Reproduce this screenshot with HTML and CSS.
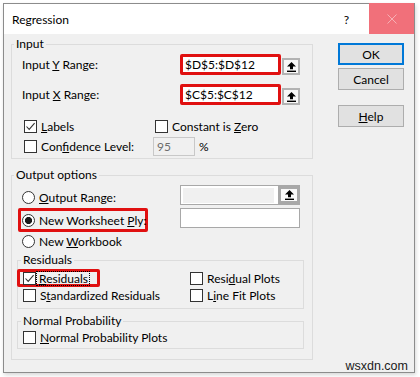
FILE: index.html
```html
<!DOCTYPE html>
<html lang="en">
<head>
<meta charset="utf-8">
<title>Regression</title>
<link rel="stylesheet" href="styles.css">
</head>
<body>
<div class="window">
  <div class="titlebar">
    <span class="title">Regression</span>
    <span class="cap-btn help-q">?</span>
    <span class="cap-btn close">
      <svg width="10" height="10" viewBox="0 0 10 10"><path d="M0.5 0.5 L9.5 9.5 M9.5 0.5 L0.5 9.5" stroke="#f6b0b5" stroke-width="1" fill="none"/></svg>
    </span>
  </div>
  <div class="body">
    <div class="groups">
      <fieldset class="group">
        <legend>Input</legend>
        <div class="gbody-input">
          <div class="range-row">
            <span class="lbl">Input <u>Y</u> Range:</span>
            <div class="refedit">
              <span class="ref-text hl">$D$5:$D$12</span>
              <span class="ref-btn">
                <svg width="9" height="10" viewBox="0 0 9 10"><path d="M4.5 0 L9 4.6 H6 V7.2 H3 V4.6 H0 Z" fill="#000"/><rect x="0" y="8.6" width="9" height="1.4" fill="#000"/></svg>
              </span>
            </div>
          </div>
          <div class="range-row">
            <span class="lbl">Input <u>X</u> Range:</span>
            <div class="refedit">
              <span class="ref-text hl">$C$5:$C$12</span>
              <span class="ref-btn">
                <svg width="9" height="10" viewBox="0 0 9 10"><path d="M4.5 0 L9 4.6 H6 V7.2 H3 V4.6 H0 Z" fill="#000"/><rect x="0" y="8.6" width="9" height="1.4" fill="#000"/></svg>
              </span>
            </div>
          </div>
          <div class="cb-row labels-row">
            <span class="cb-item w131"><span class="cb"><svg width="11" height="11" viewBox="0 0 11 11"><path d="M1.5 5.5 L4.2 8.4 L9.6 2.2" stroke="#333" stroke-width="1.1" fill="none"/></svg></span><span><u>L</u>abels</span></span>
            <span class="cb-item"><span class="cb"></span><span>Constant is <u>Z</u>ero</span></span>
          </div>
          <div class="cb-row">
            <span class="cb-item w129"><span class="cb"></span><span>Con<u>f</u>idence Level:</span></span>
            <span class="num-field">95</span>
            <span class="pct">%</span>
          </div>
        </div>
      </fieldset>

      <fieldset class="group output-group">
        <legend>Output options</legend>
        <div class="gbody-output">
          <div class="opt-row r1">
            <div class="opt-left"><span class="rb"></span><span><u>O</u>utput Range:</span></div>
            <div class="refedit out">
              <span class="ref-text dis"></span>
              <span class="ref-btn">
                <svg width="9" height="10" viewBox="0 0 9 10"><path d="M4.5 0 L9 4.6 H6 V7.2 H3 V4.6 H0 Z" fill="#000"/><rect x="0" y="8.6" width="9" height="1.4" fill="#000"/></svg>
              </span>
            </div>
          </div>
          <div class="opt-row r2">
            <div class="opt-left"><span class="hl-box"><span class="rb on"></span><span>New Worksheet <u>P</u>ly:</span></span></div>
            <div class="text-field"></div>
          </div>
          <div class="opt-row r3">
            <div class="opt-left"><span class="rb"></span><span>New <u>W</u>orkbook</span></div>
          </div>

          <fieldset class="sub">
            <legend>Residuals</legend>
            <div class="res-body">
              <div class="res-cell"><span class="hl-box res-hl"><span class="cb"><svg width="11" height="11" viewBox="0 0 11 11"><path d="M1.5 5.5 L4.2 8.4 L9.6 2.2" stroke="#333" stroke-width="1.1" fill="none"/></svg></span><span class="focus"><u>R</u>esiduals</span></span></div>
              <div class="res-cell"><span class="cb"></span><span>Resi<u>d</u>ual Plots</span></div>
              <div class="res-cell r2c"><span class="cb"></span><span>S<u>t</u>andardized Residuals</span></div>
              <div class="res-cell"><span class="cb"></span><span>L<u>i</u>ne Fit Plots</span></div>
            </div>
          </fieldset>

          <fieldset class="sub np">
            <legend>Normal Probability</legend>
            <div class="np-body">
              <span class="cb"></span><span><u>N</u>ormal Probability Plots</span>
            </div>
          </fieldset>
        </div>
      </fieldset>
    </div>

    <div class="buttons">
      <div class="btn ok">OK</div>
      <div class="btn cancel">Cancel</div>
      <div class="btn help"><span><u>H</u>elp</span></div>
    </div>
  </div>
</div>
<div class="watermark">wsxdn.com</div>
</body>
</html>
```
FILE: styles.css
```css
* { box-sizing: border-box; }
html, body { margin: 0; padding: 0; }
body {
  width: 420px;
  height: 377px;
  overflow: hidden;
  background: #ffffff;
  font-family: "Lato", "Noto Sans", sans-serif;
  font-size: 12px;
  color: #000;
  position: relative;
  white-space: nowrap;
}
u { text-decoration-thickness: 1px; text-underline-offset: 1px; }

.window {
  margin: 3px 0 0 3px;
  width: 412px;
  height: 370px;
  border: 1px solid #8c8c8c;
  background: #f0f0f0;
  box-shadow: 1px 2px 4px rgba(0,0,0,0.16);
  display: flex;
  flex-direction: column;
}

.titlebar {
  flex: none;
  height: 30px;
  background: #fff;
  display: flex;
  align-items: stretch;
}
.title {
  flex: 1;
  padding-left: 8px;
  display: flex;
  align-items: center;
}
.cap-btn {
  width: 45px;
  display: flex;
  align-items: center;
  justify-content: center;
}
.help-q { font-size: 12px; }
.close { background: #f1707a; margin-top: -1px; }

.body {
  flex: 1;
  display: grid;
  grid-template-columns: 302px 66px;
  column-gap: 25px;
  padding: 2px 0 0 7px;
  align-items: start;
}

fieldset {
  margin: 0;
  padding: 0;
  border: 1px solid #dcdcdc;
  min-inline-size: 0;
}
legend {
  padding: 0 2px;
  margin-left: 2px;
  height: 16px;
  line-height: 16px;
}

/* Input group */
.gbody-input { padding: 2px 0 2px 10px; }
.range-row {
  display: flex;
  align-items: center;
  height: 21px;
}
.range-row + .range-row { margin-top: 9px; }
.lbl { width: 158px; }

.refedit {
  display: flex;
  width: 120px;
  height: 21px;
}
.ref-text {
  background: #fff;
  display: flex;
  align-items: center;
}
.ref-text.hl {
  width: 101px;
  border: 3px solid #e01010;
  border-radius: 2px;
  padding-left: 2px;
  margin-right: 1px;
}
.ref-btn {
  width: 18px;
  height: 17px;
  align-self: flex-end;
  border: 2px solid #b2b2b2;
  background: #f7f7f7;
  display: flex;
  align-items: center;
  justify-content: center;
}

.cb-row {
  display: flex;
  align-items: center;
  height: 20px;
  padding-left: 2px;
}
.labels-row { margin-top: 11px; }
.cb-item { display: flex; align-items: center; }
.w131 { width: 131px; }
.w129 { width: 129px; }

.cb {
  flex: none;
  width: 13px;
  height: 13px;
  border: 1px solid #333;
  background: #fff;
  margin-right: 4px;
  display: flex;
  align-items: center;
  justify-content: center;
}
.rb {
  flex: none;
  width: 13px;
  height: 13px;
  border: 1px solid #333;
  border-radius: 50%;
  background: #fff;
  margin-right: 4px;
}
.rb.on { background: radial-gradient(circle, #1a1a1a 3.2px, #fff 3.9px); }

.num-field {
  width: 42px;
  height: 19px;
  border: 1px solid #c8c8c8;
  background: #f0f0f0;
  color: #6d6d6d;
  padding-left: 3px;
  display: flex;
  align-items: center;
}
.pct { margin-left: 4px; }

/* Output group */
.output-group { margin-top: 8px; }
.gbody-output { padding: 4px 8px 10px 5px; }
.opt-row { display: flex; }
.opt-left {
  width: 163px;
  display: flex;
  align-items: center;
  padding-left: 5px;
}
.opt-row.r1 { height: 21px; }
.opt-row.r2 { height: 24px; }
.opt-row.r3 { height: 18px; }
.opt-row.r1 .refedit { margin-top: -2px; }
.opt-row.r2 .opt-left { padding-left: 1px; }

.refedit.out {
  height: 20px;
  border: 1px solid #a8a8a8;
  background: #fff;
  padding: 2px 0 1px 2px;
  align-self: flex-start;
}
.ref-text.dis {
  flex: 1;
  background: #f0f0f0;
  margin-right: 4px;
}
.refedit.out .ref-btn {
  height: 18px;
  margin: -2px -1px -1px 0;
  width: 22px;
  border: 3px solid #a8a8a8;
  background: #fafafa;
}

.hl-box {
  display: flex;
  align-items: center;
  border: 3px solid #e01010;
  border-radius: 2px;
}
.opt-row.r2 .hl-box {
  width: 130px;
  height: 24px;
  padding: 0 1px 0 1px;
}
.text-field {
  width: 120px;
  height: 20px;
  border: 1px solid #a8a8a8;
  background: #fff;
}

.sub { width: 287px; }
.sub:first-of-type { margin-top: 2px; }
.sub legend { margin-left: 3px; }
.res-body {
  display: grid;
  grid-template-columns: 172px 1fr;
  grid-template-rows: 18px 16px;
  padding: 1px 0 5px 0;
}
.res-cell { display: flex; align-items: center; }
.r2c { padding-left: 5px; }
.res-hl {
  margin-left: -1px;
  width: 83px;
  height: 18px;
  padding: 0 2px 0 3px;
}
.res-hl .cb { margin-right: 1px; }
.focus {
  outline: 1px dotted #000;
  outline-offset: 0;
  padding: 0 1px 0 2px;
  line-height: 13px;
}
.np { margin-top: 4px; }
.np-body {
  display: flex;
  align-items: center;
  height: 17px;
  padding-left: 5px;
  margin-bottom: 2px;
}

/* Buttons */
.buttons {
  display: flex;
  flex-direction: column;
  margin-top: 7px;
}
.btn {
  height: 22px;
  border: 1px solid #adadad;
  background: #e1e1e1;
  display: flex;
  align-items: center;
  justify-content: center;
}
.btn.ok { border: 2px solid #0078d7; }
.btn.cancel { margin-top: 3px; }
.btn.help { margin-top: 15px; }

.watermark {
  position: absolute;
  right: 12px;
  bottom: 4px;
  font-family: "Liberation Sans", Arial, sans-serif;
  font-size: 12.5px;
  line-height: 13px;
  color: #1a1a1a;
}
```
